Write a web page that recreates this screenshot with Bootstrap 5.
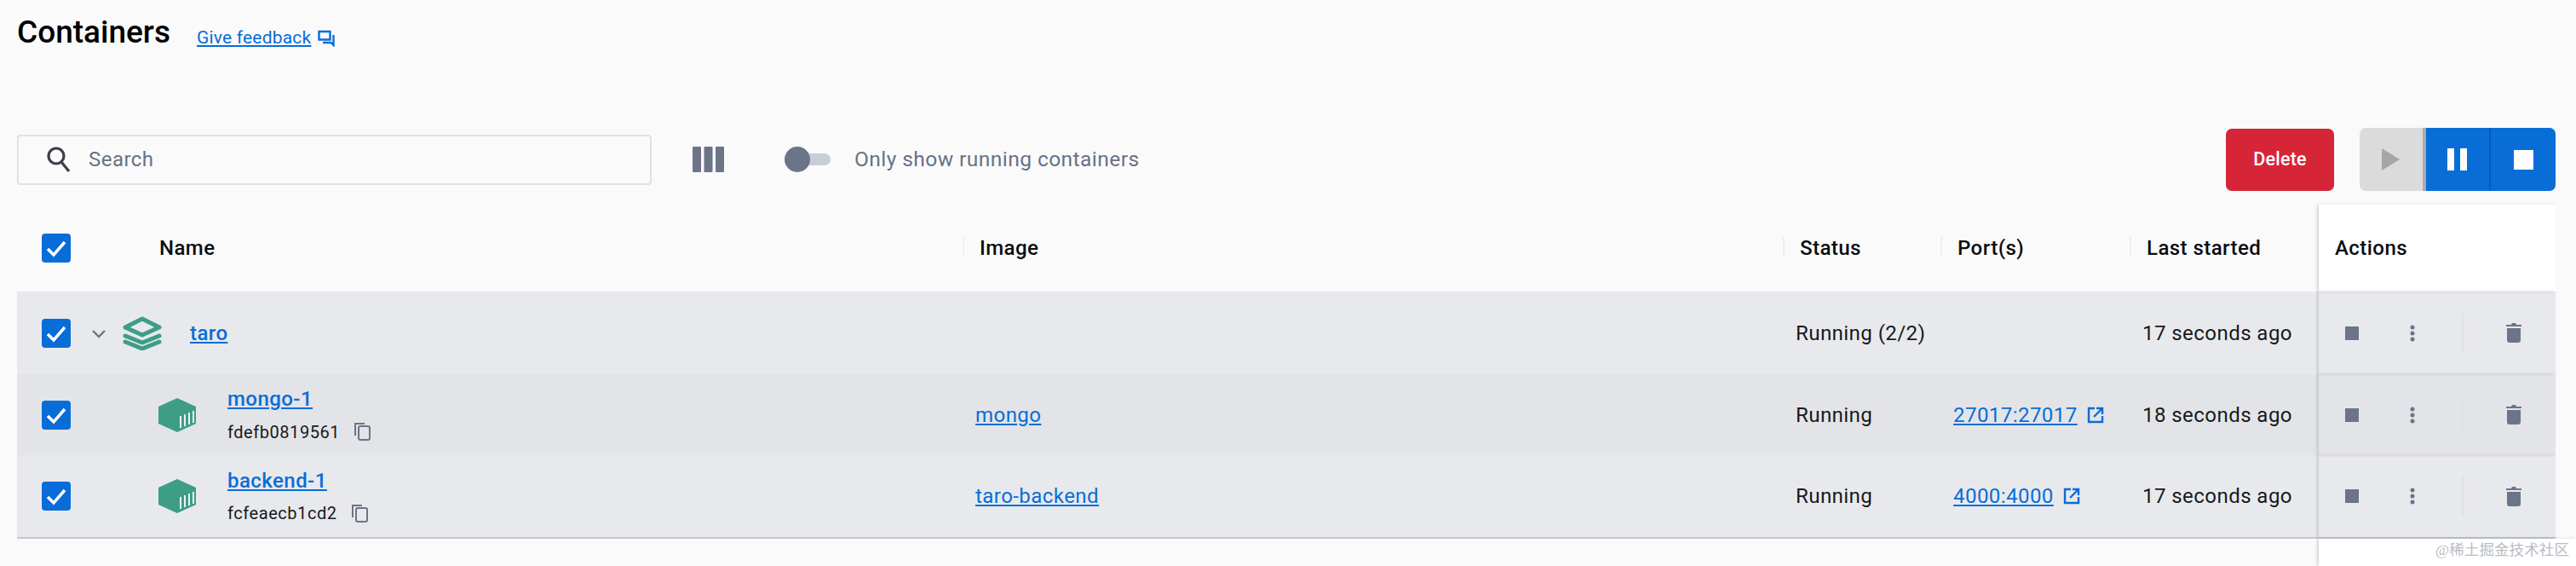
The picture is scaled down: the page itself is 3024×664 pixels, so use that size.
<!doctype html>
<html lang="en"><head><meta charset="utf-8"><title>Containers</title>
<link href="https://cdn.jsdelivr.net/npm/bootstrap@5.3.0/dist/css/bootstrap.min.css" rel="stylesheet">
<style>
html,body{height:664px;overflow:hidden}
body{background:#fafafb;font-family:Roboto,"Liberation Sans",sans-serif;color:#17191e;font-size:24px;letter-spacing:.45px;width:3024px}
a{color:#086dd7}
.page{height:664px;padding:0 24px 0 20px;display:flex;flex-direction:column}
.title-bar{height:150px;padding-top:17px;align-items:flex-start}
.title-txt{font-size:37px;font-weight:500;line-height:42px;color:#000;letter-spacing:0;margin:0}
.fb-link{font-size:21px;margin:12px 0 0 31px;letter-spacing:.2px}
.tool-bar{height:74px;margin-top:-6px;padding-top:6px;box-sizing:content-box}
.search-box{width:745px;height:59px;border:2px solid #dfe1e5;border-radius:4px;padding-left:32px;color:#677285;gap:20px}
.cols-ico{margin-left:48px}
.tgl{margin-left:71px;width:54px;height:30px;position:relative}
.tgl-track{display:block;width:54px;height:14px;margin-top:8px;border-radius:7px;background:#c8cdd6}
.tgl-knob{position:absolute;left:0;top:0;width:30px;height:30px;border-radius:50%;background:#6c7488}
.tgl-lbl{margin-left:28px;color:#677285;font-size:24.5px}
.del-btn{width:127px;height:73px;background:#d52536;border-radius:7px;color:#fff;font-weight:500;font-size:21.5px;letter-spacing:.2px;margin-right:30px}
.act-group{height:74px;width:230px;border-radius:7px;overflow:hidden}
.act-seg{height:100%;width:74px}
.seg-off{background:#dbdbdc;border-right:4px solid #acacad;width:78px}
.seg-on{background:#086dd7;width:76px}
.seg-on.first{border-right:2px solid #0758b5}
.grid-row{display:grid;grid-template-columns:1110px 963px 185px 222px 222px 278px}
.hd-row{height:102px;margin-top:16px;font-weight:500;color:#0b0d10}
.hd-cell{padding-left:20px;position:relative}
.hd-cell::before{content:"";position:absolute;left:0;top:38px;width:2px;height:24px;background:#eeeff1}
.hd-first{padding-left:29px}
.hd-first::before,.hd-act::before{display:none}
.hd-act{background:#fff;box-shadow:-2px 0 3px rgba(100,110,125,.25);padding-left:19px}
.tbl-row{height:97px;background:#e8e9ed}
.tbl-row.alt{background:#e3e4e8;height:95px}
.tbl-row.last{border-bottom:2px solid #c6c8cd;height:98px}
.b-cell{padding-left:15px}
.n-cell{padding-left:29px}
.chk{width:34px;height:34px;border-radius:4px;background:#086dd7;flex:none}
.chev{width:64px;margin-left:0;text-align:center;flex:none;padding-left:2px}
.stack-ico{margin-left:-3px;margin-right:33px;flex:none}
.box-ico{margin-left:102px;margin-right:36px;flex:none}
.strong-link{font-weight:500}
.nm-stack{line-height:1}
.nm-id{font-size:20px;letter-spacing:.55px;margin-top:16px;color:#17191e}
.act-cell{box-shadow:-2px 0 3px rgba(100,110,125,.25);position:relative}
.a-stop{margin-left:31px;width:16px;height:16px;background:#6c7488;flex:none}
.a-dots{margin-left:60px;flex:none}
.a-sep{margin-left:55px;width:2px;height:46px;background:#dfe1e5;flex:none}
.a-trash{margin-left:50px;flex:none}
.ext-ico{margin-left:11px}
.foot-row{flex:1}
.foot-act{background:#fff;box-shadow:-2px 0 3px rgba(100,110,125,.25);margin-right:-24px}
.wm-txt{position:absolute;right:8px;bottom:6px;font-family:"Liberation Serif","Noto Sans CJK SC",serif;font-size:17.5px;letter-spacing:.1px;color:#b9bcc2}
</style></head><body>
<div class="page">
<div class="title-bar d-flex">
 <h1 class="title-txt">Containers</h1>
 <a class="fb-link" href="#">Give feedback</a>
 <svg class="ms-2" style="margin-top:18px" width="20" height="20" viewBox="0 0 20 20" fill="none" stroke="#086dd7" stroke-width="2.4"><path d="M1.5 2h13v9.500h-13z"/><path d="M18.500 6v12l-3-3H6" /></svg>
</div>
<div class="tool-bar d-flex align-items-center">
 <div class="search-box d-flex align-items-center">
  <svg width="30" height="32" viewBox="0 0 30 32" fill="none" stroke="#3d4048" stroke-width="3.2"><circle cx="12" cy="12" r="9"/><path d="M18 19l9 11"/></svg>
  <span>Search</span>
 </div>
 <svg class="cols-ico" width="37" height="30" viewBox="0 0 37 30" fill="#6c7488"><rect width="10" height="30" rx="1"/><rect x="13.500" width="10" height="30" rx="1"/><rect x="27" width="10" height="30" rx="1"/></svg>
 <div class="tgl"><span class="tgl-track"></span><span class="tgl-knob"></span></div>
 <span class="tgl-lbl">Only show running containers</span>
 <div class="ms-auto d-flex align-items-center">
  <div class="del-btn d-flex align-items-center justify-content-center">Delete</div>
  <div class="act-group d-flex">
   <div class="act-seg seg-off d-flex align-items-center justify-content-center"><svg width="22" height="26" viewBox="0 0 22 26" fill="#a6a6a7"><path d="M0 0l21 13L0 26z"/></svg></div>
   <div class="act-seg seg-on first d-flex align-items-center justify-content-center"><svg width="24" height="26" viewBox="0 0 24 26" fill="#fff"><rect width="8" height="26"/><rect x="15" width="8" height="26"/></svg></div>
   <div class="act-seg seg-on d-flex align-items-center justify-content-center"><svg width="23" height="23" viewBox="0 0 23 23" fill="#fff"><rect width="23" height="23"/></svg></div>
  </div>
 </div>
</div>
<div class="grid-row hd-row align-items-stretch">
 <div class="hd-cell hd-first d-flex align-items-center"><svg class="chk" viewBox="0 0 34 34"><path fill="none" stroke="#fff" stroke-width="3.500" d="M7 18l7 7 13-15"/></svg><span style="margin-left:104px">Name</span></div>
 <div class="hd-cell d-flex align-items-center">Image</div>
 <div class="hd-cell d-flex align-items-center">Status</div>
 <div class="hd-cell d-flex align-items-center">Port(s)</div>
 <div class="hd-cell d-flex align-items-center">Last started</div>
 <div class="hd-cell hd-act d-flex align-items-center">Actions</div>
</div>
<div class="grid-row tbl-row">
 <div class="n-cell d-flex align-items-center"><svg class="chk" viewBox="0 0 34 34"><path fill="none" stroke="#fff" stroke-width="3.500" d="M7 18l7 7 13-15"/></svg>
  <span class="chev"><svg width="16" height="10" viewBox="0 0 16 10" fill="none" stroke="#6c7488" stroke-width="2.400"><path d="M1 1l7 7 7-7"/></svg></span>
  <svg class="stack-ico" width="46" height="40" viewBox="0 0 46 40" fill="none" stroke="#3e9d87" stroke-width="5" stroke-linejoin="round" stroke-linecap="round"><path d="M23 3 43 13 23 22 3 13z"/><path d="M3 23l20 8 20-8"/><path d="M3 30l20 8 20-8"/></svg>
  <a class="strong-link" href="#">taro</a></div>
 <div></div>
 <div class="b-cell d-flex align-items-center">Running (2/2)</div>
 <div></div>
 <div class="b-cell d-flex align-items-center">17 seconds ago</div>
 <div class="act-cell d-flex align-items-center"><span class="a-stop"></span><svg class="a-dots" width="6" height="20" viewBox="0 0 6 20" fill="#6c7488"><circle cx="3" cy="3" r="2.500"/><circle cx="3" cy="10" r="2.500"/><circle cx="3" cy="17" r="2.500"/></svg><span class="a-sep"></span><svg class="a-trash" width="18" height="23" viewBox="0 0 18 23" fill="#6c7488"><path d="M0 2h6l1-2h4l1 2h6v2H0zM1 6h16v14q0 3-3 3H4q-3 0-3-3z"/></svg></div>
</div>
<div class="grid-row tbl-row alt">
 <div class="n-cell d-flex align-items-center"><svg class="chk" viewBox="0 0 34 34"><path fill="none" stroke="#fff" stroke-width="3.500" d="M7 18l7 7 13-15"/></svg>
  <svg class="box-ico" width="46" height="40" viewBox="0 0 46 40"><path fill="#3e9d87" d="M23 0 45 10V30L23 40 1 30V10z"/><path stroke="#e8f3f0" stroke-width="2" d="M27 21v14M32 19v14M37 17v14M42 15v14"/></svg>
  <div class="nm-stack"><a class="strong-link" href="#">mongo-1</a><div class="nm-id d-flex align-items-center">fdefb0819561<svg class="ms-3" width="20" height="21" viewBox="0 0 20 21" fill="none" stroke="#6c7488" stroke-width="2"><rect x="6" y="4" width="13" height="16" rx="2"/><path d="M2 15V1h11"/></svg></div></div></div>
 <div class="b-cell d-flex align-items-center"><a href="#">mongo</a></div>
 <div class="b-cell d-flex align-items-center">Running</div>
 <div class="b-cell d-flex align-items-center"><a href="#">27017:27017</a><svg class="ext-ico" width="20" height="20" viewBox="0 0 20 20" fill="none" stroke="#086dd7" stroke-width="2.400"><path d="M9 2H2v16h16v-7M11 2h7v7M18 2 8 12"/></svg></div>
 <div class="b-cell d-flex align-items-center">18 seconds ago</div>
 <div class="act-cell d-flex align-items-center"><span class="a-stop"></span><svg class="a-dots" width="6" height="20" viewBox="0 0 6 20" fill="#6c7488"><circle cx="3" cy="3" r="2.500"/><circle cx="3" cy="10" r="2.500"/><circle cx="3" cy="17" r="2.500"/></svg><span class="a-sep"></span><svg class="a-trash" width="18" height="23" viewBox="0 0 18 23" fill="#6c7488"><path d="M0 2h6l1-2h4l1 2h6v2H0zM1 6h16v14q0 3-3 3H4q-3 0-3-3z"/></svg></div>
</div>
<div class="grid-row tbl-row last">
 <div class="n-cell d-flex align-items-center"><svg class="chk" viewBox="0 0 34 34"><path fill="none" stroke="#fff" stroke-width="3.500" d="M7 18l7 7 13-15"/></svg>
  <svg class="box-ico" width="46" height="40" viewBox="0 0 46 40"><path fill="#3e9d87" d="M23 0 45 10V30L23 40 1 30V10z"/><path stroke="#e8f3f0" stroke-width="2" d="M27 21v14M32 19v14M37 17v14M42 15v14"/></svg>
  <div class="nm-stack"><a class="strong-link" href="#">backend-1</a><div class="nm-id d-flex align-items-center">fcfeaecb1cd2<svg class="ms-3" width="20" height="21" viewBox="0 0 20 21" fill="none" stroke="#6c7488" stroke-width="2"><rect x="6" y="4" width="13" height="16" rx="2"/><path d="M2 15V1h11"/></svg></div></div></div>
 <div class="b-cell d-flex align-items-center"><a href="#">taro-backend</a></div>
 <div class="b-cell d-flex align-items-center">Running</div>
 <div class="b-cell d-flex align-items-center"><a href="#">4000:4000</a><svg class="ext-ico" width="20" height="20" viewBox="0 0 20 20" fill="none" stroke="#086dd7" stroke-width="2.400"><path d="M9 2H2v16h16v-7M11 2h7v7M18 2 8 12"/></svg></div>
 <div class="b-cell d-flex align-items-center">17 seconds ago</div>
 <div class="act-cell d-flex align-items-center"><span class="a-stop"></span><svg class="a-dots" width="6" height="20" viewBox="0 0 6 20" fill="#6c7488"><circle cx="3" cy="3" r="2.500"/><circle cx="3" cy="10" r="2.500"/><circle cx="3" cy="17" r="2.500"/></svg><span class="a-sep"></span><svg class="a-trash" width="18" height="23" viewBox="0 0 18 23" fill="#6c7488"><path d="M0 2h6l1-2h4l1 2h6v2H0zM1 6h16v14q0 3-3 3H4q-3 0-3-3z"/></svg></div>
</div>
<div class="grid-row foot-row"><div style="grid-column:1/6"></div><div class="foot-act"></div></div>
</div>
<div class="wm-txt">@稀土掘金技术社区</div>
<script src="https://cdn.jsdelivr.net/npm/bootstrap@5.3.0/dist/js/bootstrap.bundle.min.js"></script>
</body></html>
